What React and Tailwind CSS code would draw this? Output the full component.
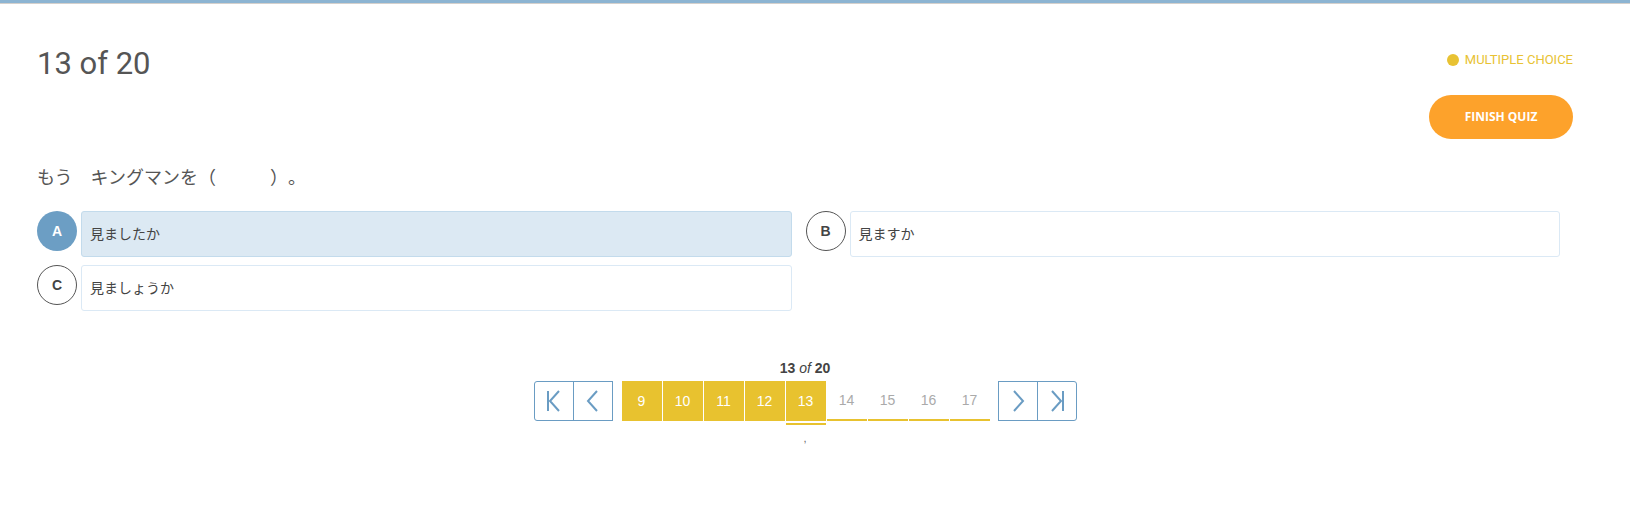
import React from 'react';

const options = [
  { key: 'A', text: '見ましたか', selected: true },
  { key: 'B', text: '見ますか' },
  { key: 'C', text: '見ましょうか' },
];

const jp = { fontFamily: 'Roboto, "Noto Sans CJK JP", sans-serif' };
const arial = { fontFamily: '"Liberation Sans", Arial, sans-serif' };

function Option({ opt }) {
  return (
    <div className="flex items-start gap-1">
      <div
        style={arial}
        className={
          'w-10 h-10 shrink-0 rounded-full flex items-center justify-center text-[14px] font-bold ' +
          (opt.selected ? 'bg-[#6c9ec4] text-white' : 'border border-[#555] text-[#444]')
        }
      >
        {opt.key}
      </div>
      <div
        className={
          'flex-1 h-[46px] rounded-[3px] border flex items-center px-2 text-[14px] text-[#444] ' +
          (opt.selected ? 'bg-[#dce9f3] border-[#c3dbec]' : 'bg-white border-[#dbe9f5]')
        }
      >
        {opt.text}
      </div>
    </div>
  );
}

function NavIcon({ type }) {
  return (
    <svg width="20" height="22" viewBox="0 0 20 22" fill="none" stroke="#6a9cc3" strokeWidth="2">
      {type === 'first' && (
        <>
          <line x1="4" y1="1" x2="4" y2="21" />
          <polyline points="15,1 6,11 15,21" />
        </>
      )}
      {type === 'prev' && <polyline points="14,1 5,11 14,21" />}
      {type === 'next' && <polyline points="6,1 15,11 6,21" />}
      {type === 'last' && (
        <>
          <polyline points="5,1 14,11 5,21" />
          <line x1="16" y1="1" x2="16" y2="21" />
        </>
      )}
    </svg>
  );
}

export default function App() {
  const done = [9, 10, 11, 12];
  const upcoming = [14, 15, 16, 17];
  return (
    <div className="w-[1630px] h-[516px] bg-white overflow-hidden" style={jp}>
      <div className="h-[3px] bg-[#8cb4d2]" />
      <div className="h-px bg-[#d4d0cc]" />
      <div className="pl-[37px] pr-[57px]">
        <div className="flex justify-between items-start">
          <div className="pt-[38px] text-[31px] leading-[44px] text-[#555]">13 of 20</div>
          <div className="flex flex-col items-end pt-[44px]">
            <div className="flex items-center gap-[6px] text-[13px] leading-[24px] text-[#e8c233]">
              <span className="w-3 h-3 rounded-full bg-[#e8c233]" />
              MULTIPLE CHOICE
            </div>
            <button
              className="mt-[23px] w-[144px] h-[44px] rounded-full bg-[#fda22b] text-white text-[12px] font-bold"
              style={{ fontFamily: '"Open Sans", sans-serif' }}
            >
              FINISH QUIZ
            </button>
          </div>
        </div>

        <div className="mt-[27px] text-[18px] leading-[24px] text-[#555] [text-spacing-trim:space-all]">
          もう　キングマンを（　　　）。
        </div>

        <div className="mt-[21px] pr-[13px] grid grid-cols-2 gap-x-[14px] gap-y-[8px]">
          {options.map(o => (
            <Option key={o.key} opt={o} />
          ))}
        </div>

        <div className="mt-[48px] flex flex-col items-center" style={arial}>
          <div className="text-[14px] leading-[18px] text-[#444]">
            <span className="font-bold">13</span> <span className="italic">of</span> <span className="font-bold">20</span>
          </div>
          <div className="mt-[4px] flex items-start">
            <div className="flex">
              <div className="w-10 h-10 border border-[#6a9cc3] rounded-l-[3px] flex items-center justify-center">
                <NavIcon type="first" />
              </div>
              <div className="w-10 h-10 -ml-px border border-[#6a9cc3] flex items-center justify-center">
                <NavIcon type="prev" />
              </div>
            </div>
            <div className="ml-[9px] flex items-start gap-px">
              {done.map(n => (
                <div key={n} className="w-10 h-10 bg-[#e8c22f] text-white text-[14px] flex items-center justify-center">
                  {n}
                </div>
              ))}
              <div className="flex flex-col">
                <div className="w-10 h-10 bg-[#e8c22f] text-white text-[14px] flex items-center justify-center">13</div>
                <div className="mt-[2px] h-[2px] bg-[#e8c22f]" />
              </div>
              {upcoming.map(n => (
                <div key={n} className="w-10 h-10 border-b-2 border-[#e8c22f] text-[#aaa] text-[14px] flex items-center justify-center">
                  {n}
                </div>
              ))}
            </div>
            <div className="ml-[8px] flex">
              <div className="w-10 h-10 border border-[#6a9cc3] flex items-center justify-center">
                <NavIcon type="next" />
              </div>
              <div className="w-10 h-10 -ml-px border border-[#6a9cc3] rounded-r-[3px] flex items-center justify-center">
                <NavIcon type="last" />
              </div>
            </div>
          </div>
          <div className="mt-[6px] text-[11px] leading-[14px] text-[#666]">,</div>
        </div>
      </div>
    </div>
  );
}
